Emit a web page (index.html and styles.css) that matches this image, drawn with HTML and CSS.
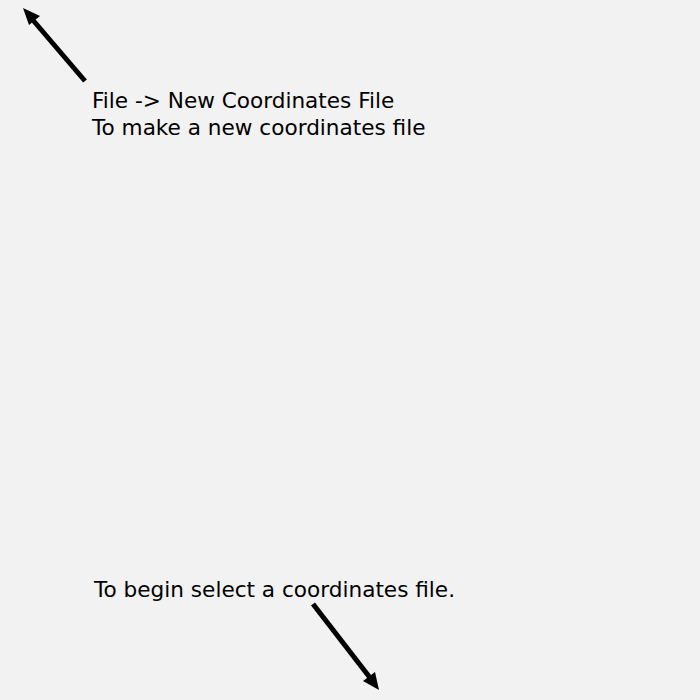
FILE: index.html
```html
<!DOCTYPE html>
<html>
<head>
<meta charset="utf-8">
<link rel="stylesheet" href="styles.css">
</head>
<body>
<div class="canvas">
  <svg class="arrows" width="700" height="700" viewBox="0 0 700 700">
    <line x1="85" y1="81" x2="32" y2="19" stroke="#000" stroke-width="5"/>
    <polygon points="23,8 40,16 29,25" fill="#000"/>
    <line x1="313" y1="604" x2="371" y2="679" stroke="#000" stroke-width="5"/>
    <polygon points="379,690 363,681 375,672" fill="#000"/>
  </svg>
  <div class="hint top">
    <div>File -&gt; New Coordinates File</div>
    <div>To make a new coordinates file</div>
  </div>
  <div class="hint bottom">To begin select a coordinates file.</div>
</div>
</body>
</html>
```
FILE: styles.css
```css
html, body {
  margin: 0;
  padding: 0;
  background: #f2f2f2;
}
.canvas {
  position: relative;
  width: 700px;
  height: 700px;
  display: flex;
  flex-direction: column;
  justify-content: space-between;
  font-family: "DejaVu Sans", sans-serif;
  font-size: 21.6px;
  color: #000;
}
.arrows {
  position: absolute;
  left: 0;
  top: 0;
}
.hint {
  line-height: 27px;
}
.top {
  padding: 87px 0 0 92px;
}
.bottom {
  padding: 0 0 97px 94px;
}
```
